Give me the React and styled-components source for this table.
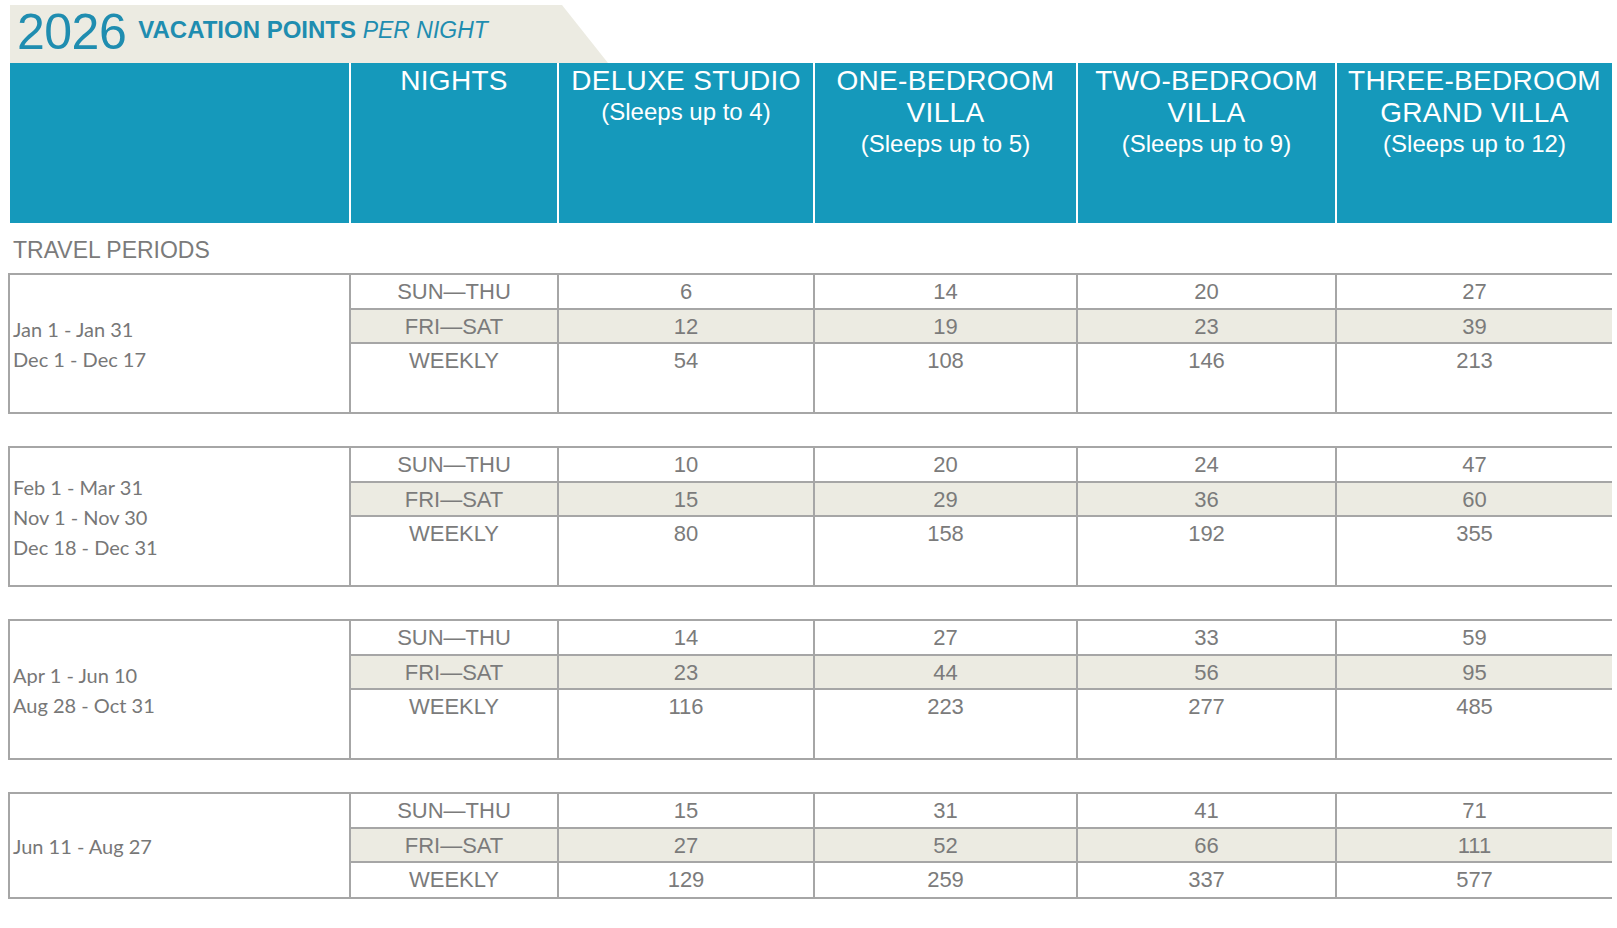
import styled, { createGlobalStyle } from "styled-components";

const COLS = "341px 208px 256px 263px 259px 275px";
const LINE = "#a6a6a6";
const BEIGE = "#ecebe2";
const TEAL = "#1599bb";
const GREY = "#7b7b7b";

const GlobalStyle = createGlobalStyle`
  body {
    margin: 0;
    background: #fff;
    font-family: "Liberation Sans", Arial, sans-serif;
  }
`;

const HEADINGS = [
  { title: [], sub: null },
  { title: ["NIGHTS"], sub: null },
  { title: ["DELUXE STUDIO"], sub: "(Sleeps up to 4)" },
  { title: ["ONE-BEDROOM", "VILLA"], sub: "(Sleeps up to 5)" },
  { title: ["TWO-BEDROOM", "VILLA"], sub: "(Sleeps up to 9)" },
  { title: ["THREE-BEDROOM", "GRAND VILLA"], sub: "(Sleeps up to 12)" },
];

const NIGHTS = ["SUN—THU", "FRI—SAT", "WEEKLY"];

const GROUPS = [
  {
    dates: ["Jan 1 - Jan 31", "Dec 1 - Dec 17"],
    rows: [
      [6, 14, 20, 27],
      [12, 19, 23, 39],
      [54, 108, 146, 213],
    ],
    tall: true,
  },
  {
    dates: ["Feb 1 - Mar 31", "Nov 1 - Nov 30", "Dec 18 - Dec 31"],
    rows: [
      [10, 20, 24, 47],
      [15, 29, 36, 60],
      [80, 158, 192, 355],
    ],
    tall: true,
  },
  {
    dates: ["Apr 1 - Jun 10", "Aug 28 - Oct 31"],
    rows: [
      [14, 27, 33, 59],
      [23, 44, 56, 95],
      [116, 223, 277, 485],
    ],
    tall: true,
  },
  {
    dates: ["Jun 11 - Aug 27"],
    rows: [
      [15, 31, 41, 71],
      [27, 52, 66, 111],
      [129, 259, 337, 577],
    ],
    tall: false,
  },
];

export default function App() {
  return (
    <>
      <GlobalStyle />
      <Page>
        <Banner>
          <Year>2026</Year>
          <Tagline>
            <Strong>VACATION POINTS</Strong> <Em>PER NIGHT</Em>
          </Tagline>
        </Banner>

        <HeaderRow>
          {HEADINGS.map((h, i) => (
            <HeadCell key={i} $last={i === HEADINGS.length - 1}>
              {h.title.map((line) => (
                <HeadLine key={line}>{line}</HeadLine>
              ))}
              {h.sub && <HeadSub>{h.sub}</HeadSub>}
            </HeadCell>
          ))}
        </HeaderRow>

        <SectionLabel>TRAVEL PERIODS</SectionLabel>

        <Groups>
          {GROUPS.map((g) => (
            <Group key={g.dates[0]} $tall={g.tall}>
              <PeriodCell>
                {g.dates.map((d) => (
                  <div key={d}>{d}</div>
                ))}
              </PeriodCell>
              {g.rows.flatMap((row, r) => [
                <Cell key={`n${r}`} $alt={r === 1} $border={r < 2}>
                  {NIGHTS[r]}
                </Cell>,
                ...row.map((v, c) => (
                  <Cell
                    key={`${r}-${c}`}
                    $alt={r === 1}
                    $border={r < 2}
                    $last={c === row.length - 1}
                  >
                    {v}
                  </Cell>
                )),
              ])}
            </Group>
          ))}
        </Groups>
      </Page>
    </>
  );
}

const Page = styled.div`
  width: 1617px;
  padding-top: 5px;
  overflow: hidden;
`;

const Banner = styled.div`
  display: flex;
  align-items: flex-start;
  box-sizing: border-box;
  margin-left: 10px;
  width: 598px;
  height: 58px;
  padding-left: 7px;
  background: ${BEIGE};
  clip-path: polygon(0 0, 552px 0, 100% 100%, 0 100%);
  color: #1f8db0;
`;

const Year = styled.div`
  margin-top: 2px;
  font-size: 50px;
  line-height: 1;
  letter-spacing: -0.5px;
`;

const Tagline = styled.div`
  margin-top: 13px;
  margin-left: 12px;
  font-size: 24px;
  line-height: 1;
  white-space: nowrap;
`;

const Strong = styled.span`
  font-weight: 700;
`;

const Em = styled.span`
  font-style: italic;
  font-size: 23px;
`;

const HeaderRow = styled.div`
  display: grid;
  grid-template-columns: ${COLS};
  margin-left: 10px;
  width: 1602px;
  height: 160px;
  background: ${TEAL};
`;

const HeadCell = styled.div`
  box-sizing: border-box;
  padding-top: 2px;
  border-right: ${({ $last }) => ($last ? "none" : "2px solid #fff")};
  color: #fff;
  text-align: center;
  white-space: nowrap;
`;

const HeadLine = styled.div`
  font-size: 28px;
  line-height: 32px;
  letter-spacing: 0.3px;
`;

const HeadSub = styled.div`
  font-size: 24px;
  line-height: 30px;
`;

const SectionLabel = styled.div`
  display: flex;
  align-items: center;
  box-sizing: border-box;
  height: 50px;
  padding: 4px 0 0 13px;
  font-size: 23px;
  color: ${GREY};
`;

const Groups = styled.div`
  display: flex;
  flex-direction: column;
  gap: 32px;
`;

const Group = styled.div`
  display: grid;
  grid-template-columns: ${COLS};
  grid-template-rows: 35px 34px ${({ $tall }) => ($tall ? "68px" : "34px")};
  margin-left: 8px;
  width: 1602px;
  border: 2px solid ${LINE};
  border-right: none;
`;

const PeriodCell = styled.div`
  grid-row: 1 / span 3;
  display: flex;
  flex-direction: column;
  justify-content: center;
  padding-left: 3px;
  border-right: 2px solid ${LINE};
  font-family: Lato, "Open Sans", sans-serif;
  font-size: 20px;
  line-height: 30px;
  color: #777;
`;

const Cell = styled.div`
  box-sizing: border-box;
  border-right: ${({ $last }) => ($last ? "none" : `2px solid ${LINE}`)};
  border-bottom: ${({ $border }) => ($border ? `2px solid ${LINE}` : "none")};
  background: ${({ $alt }) => ($alt ? BEIGE : "transparent")};
  font-size: 22px;
  line-height: 33px;
  text-align: center;
  color: ${GREY};
`;
